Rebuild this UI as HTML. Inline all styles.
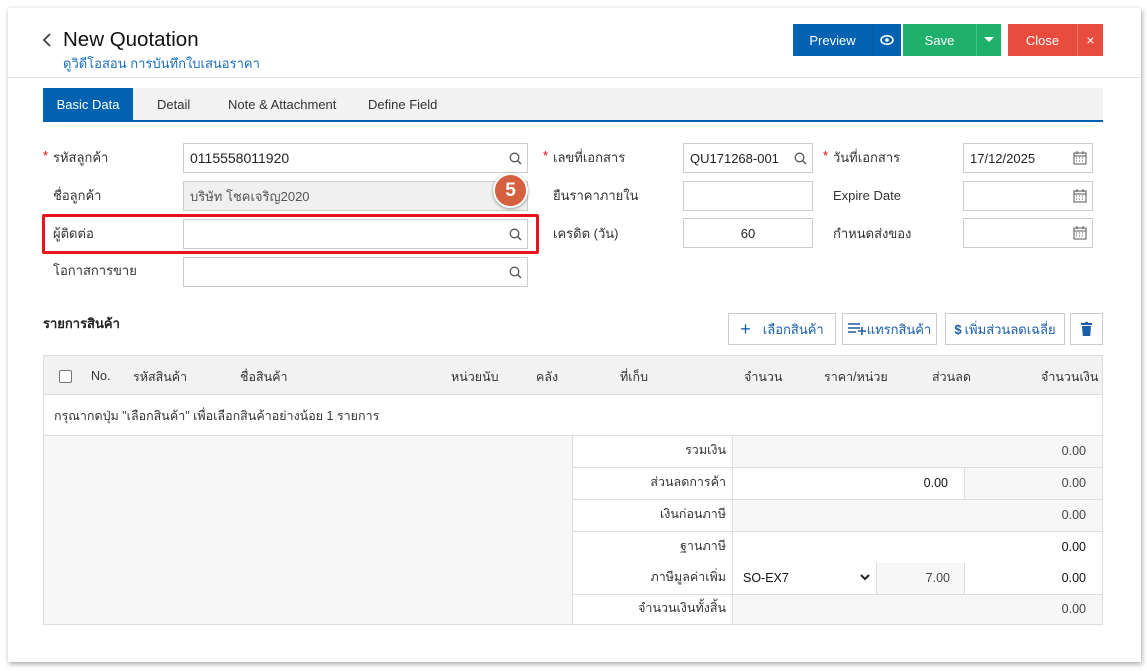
<!DOCTYPE html>
<html><head><meta charset="utf-8">
<style>
*{box-sizing:border-box;margin:0;padding:0}
body{width:1147px;height:671px;background:#fff;font-family:"Liberation Sans","DejaVu Sans",sans-serif;font-size:13px;color:#333;position:relative;overflow:hidden}
.a{position:absolute}
.card{left:8px;top:8px;width:1133px;height:654px;background:#fff;box-shadow:1px 2px 5px rgba(0,0,0,.35)}
.btn{position:absolute;color:#fff;font-size:13px;display:flex;align-items:center;justify-content:center;height:32px;top:24px}
.inp{position:absolute;height:30px;border:1px solid #ccc;background:#fff;font-size:13px;color:#222;padding-left:6px;display:flex;align-items:center}
.lbl{position:absolute;font-size:13px;color:#333}
.req{color:#e00;position:absolute;font-size:13px}
.ico{position:absolute;right:5px;top:8px}
.tb{position:absolute;top:313px;height:32px;border:1px solid #ccc;background:#fff;color:#1a5fa8;display:flex;align-items:center;justify-content:center;font-size:13px}
.th{position:absolute;top:367px;font-size:12.5px;color:#333}
.row{position:absolute;left:573px;width:530px;height:32px;border-bottom:1px solid #ddd}
.rl{position:absolute;left:0;width:160px;height:100%;text-align:right;padding-right:6px;line-height:29px;font-size:12.5px;border-right:1px solid #ddd;background:#fff}
.rv{position:absolute;height:100%;line-height:31px;text-align:right;padding-right:16px;font-size:12.5px;color:#444}
</style></head><body>
<div class="a card"></div>
<svg class="a" style="left:42px;top:33px" width="10" height="14"><path d="M8 1 L2 7 L8 13" stroke="#444" stroke-width="1.8" fill="none"/></svg>
<div class="a" style="left:63px;top:28px;font-size:20.5px;color:#111">New Quotation</div>
<div class="a" style="left:63px;top:53px;font-size:13px;color:#1a6fc0">ดูวิดีโอสอน การบันทึกใบเสนอราคา</div>
<div class="a" style="left:8px;top:77px;width:1133px;height:1px;background:#e3e3e3"></div>

<div class="btn" style="left:793px;width:79px;background:#0062b1">Preview</div>
<div class="btn" style="left:872px;width:29px;background:#0062b1;border-left:1px solid #0b57a0"><svg width="14" height="10"><ellipse cx="7" cy="5" rx="6" ry="4.2" fill="none" stroke="#fff" stroke-width="1.6"/><circle cx="7" cy="5" r="1.8" fill="#fff"/></svg></div>
<div class="btn" style="left:903px;width:73px;background:#1fb06b">Save</div>
<div class="btn" style="left:976px;width:25px;background:#1fb06b;border-left:1px solid #3fc585"><svg width="10" height="6"><path d="M0 0H10L5 5Z" fill="#fff"/></svg></div>
<div class="btn" style="left:1008px;width:69px;background:#e84c3d">Close</div>
<div class="btn" style="left:1077px;width:26px;background:#e84c3d;border-left:1px solid #f07366;font-size:14px">×</div>

<div class="a" style="left:43px;top:88px;width:1060px;height:34px;background:#f2f2f2;border-bottom:2px solid #0062b1"></div>
<div class="a" style="left:43px;top:88px;width:90px;height:34px;background:#0062b1;color:#fff;line-height:33px;text-align:center">Basic Data</div>
<div class="a" style="left:157px;top:97px">Detail</div>
<div class="a" style="left:228px;top:97px">Note &amp; Attachment</div>
<div class="a" style="left:368px;top:97px">Define Field</div>

<!-- col1 -->
<span class="req" style="left:43px;top:148px">*</span><div class="lbl" style="left:53px;top:147px">รหัสลูกค้า</div>
<div class="inp" style="left:183px;top:143px;width:345px;font-size:14px">0115558011920<svg class="ico" width="13" height="13"><circle cx="5.5" cy="5.5" r="4.3" fill="none" stroke="#555" stroke-width="1.3"/><path d="M8.5 8.5L12 12" stroke="#555" stroke-width="1.4"/></svg></div>
<div class="lbl" style="left:53px;top:185px">ชื่อลูกค้า</div>
<div class="inp" style="left:183px;top:181px;width:345px;background:#f0f0f0;color:#555">บริษัท โชคเจริญ2020</div>
<div class="lbl" style="left:53px;top:223px">ผู้ติดต่อ</div>
<div class="inp" style="left:183px;top:219px;width:345px"><svg class="ico" width="13" height="13"><circle cx="5.5" cy="5.5" r="4.3" fill="none" stroke="#555" stroke-width="1.3"/><path d="M8.5 8.5L12 12" stroke="#555" stroke-width="1.4"/></svg></div>
<div class="lbl" style="left:53px;top:260px">โอกาสการขาย</div>
<div class="inp" style="left:183px;top:257px;width:345px"><svg class="ico" width="13" height="13"><circle cx="5.5" cy="5.5" r="4.3" fill="none" stroke="#555" stroke-width="1.3"/><path d="M8.5 8.5L12 12" stroke="#555" stroke-width="1.4"/></svg></div>
<div class="a" style="left:42px;top:214px;width:497px;height:40px;border:3px solid #e8141c;border-radius:2px"></div>
<div class="a" style="left:493px;top:173px;width:35px;height:35px;border-radius:50%;background:#d5603f;border:2px solid #fff;box-shadow:0 1px 3px rgba(0,0,0,.4);color:#fff;font-weight:bold;font-size:19px;text-align:center;line-height:31px">5</div>

<!-- col2 -->
<span class="req" style="left:543px;top:148px">*</span><div class="lbl" style="left:553px;top:147px">เลขที่เอกสาร</div>
<div class="inp" style="left:683px;top:143px;width:130px">QU171268-001<svg class="ico" width="13" height="13"><circle cx="5.5" cy="5.5" r="4.3" fill="none" stroke="#555" stroke-width="1.3"/><path d="M8.5 8.5L12 12" stroke="#555" stroke-width="1.4"/></svg></div>
<div class="lbl" style="left:553px;top:185px">ยืนราคาภายใน</div>
<div class="inp" style="left:683px;top:181px;width:130px"></div>
<div class="lbl" style="left:553px;top:223px">เครดิต (วัน)</div>
<div class="inp" style="left:683px;top:218px;width:130px;justify-content:center;padding:0">60</div>

<!-- col3 -->
<span class="req" style="left:823px;top:148px">*</span><div class="lbl" style="left:833px;top:147px">วันที่เอกสาร</div>
<div class="inp" style="left:963px;top:143px;width:130px">17/12/2025<svg class="ico" style="top:7px" width="14" height="14"><rect x="1" y="2" width="12" height="11" fill="none" stroke="#555"/><path d="M1 5H13M4 0V3M10 0V3" stroke="#555"/><path d="M3 7h1M6 7h1M9 7h1M3 10h1M6 10h1M9 10h1" stroke="#555"/></svg></div>
<div class="lbl" style="left:833px;top:188px">Expire Date</div>
<div class="inp" style="left:963px;top:181px;width:130px"><svg class="ico" style="top:7px" width="14" height="14"><rect x="1" y="2" width="12" height="11" fill="none" stroke="#555"/><path d="M1 5H13M4 0V3M10 0V3" stroke="#555"/><path d="M3 7h1M6 7h1M9 7h1M3 10h1M6 10h1M9 10h1" stroke="#555"/></svg></div>
<div class="lbl" style="left:833px;top:223px">กำหนดส่งของ</div>
<div class="inp" style="left:963px;top:218px;width:130px"><svg class="ico" style="top:7px" width="14" height="14"><rect x="1" y="2" width="12" height="11" fill="none" stroke="#555"/><path d="M1 5H13M4 0V3M10 0V3" stroke="#555"/><path d="M3 7h1M6 7h1M9 7h1M3 10h1M6 10h1M9 10h1" stroke="#555"/></svg></div>

<div class="a" style="left:43px;top:313px;font-weight:bold;color:#222">รายการสินค้า</div>
<div class="tb" style="left:728px;width:108px"><span style="font-size:18px;margin-right:12px">+</span>เลือกสินค้า</div>
<div class="tb" style="left:842px;width:95px"><svg width="18" height="12" style="margin-right:1px"><path d="M0 1H12M0 5H12M0 9H8M10 8H18M14 4V12" stroke="#1a5fa8" stroke-width="1.6"/></svg>แทรกสินค้า</div>
<div class="tb" style="left:945px;width:120px"><b style="margin-right:3px">$</b>เพิ่มส่วนลดเฉลี่ย</div>
<div class="tb" style="left:1070px;width:33px"><svg width="11" height="14"><rect x="0" y="1" width="11" height="2" fill="#1a5fa8"/><rect x="4" y="0" width="3" height="1" fill="#1a5fa8"/><path d="M1 4H10L9.2 14H1.8Z" fill="#1a5fa8"/></svg></div>

<div class="a" style="left:43px;top:355px;width:1060px;height:270px;border:1px solid #ddd"></div>
<div class="a" style="left:44px;top:356px;width:1058px;height:39px;background:#f2f2f2;border-bottom:1px solid #ddd"></div>
<div class="a" style="left:59px;top:370px;width:13px;height:13px;border:1px solid #777;border-radius:2px;background:#fff"></div>
<div class="th" style="left:91px;top:369px">No.</div>
<div class="th" style="left:133px">รหัสสินค้า</div>
<div class="th" style="left:240px">ชื่อสินค้า</div>
<div class="th" style="left:451px">หน่วยนับ</div>
<div class="th" style="left:536px">คลัง</div>
<div class="th" style="left:620px">ที่เก็บ</div>
<div class="th" style="left:744px">จำนวน</div>
<div class="th" style="left:824px">ราคา/หน่วย</div>
<div class="th" style="left:932px">ส่วนลด</div>
<div class="th" style="left:1041px">จำนวนเงิน</div>
<div class="a" style="left:54px;top:406px;font-size:12.5px">กรุณากดปุ่ม "เลือกสินค้า" เพื่อเลือกสินค้าอย่างน้อย 1 รายการ</div>
<div class="a" style="left:44px;top:435px;width:529px;height:189px;background:#f7f7f7;border-top:1px solid #ddd;border-right:1px solid #ddd"></div>
<div class="a" style="left:573px;top:435px;width:530px;height:1px;background:#ddd"></div>

<div class="row" style="top:436px"><div class="rl">รวมเงิน</div><div class="rv" style="left:160px;width:369px;background:#f7f7f7">0.00</div></div>
<div class="row" style="top:468px"><div class="rl">ส่วนลดการค้า</div><div class="rv" style="left:160px;width:232px;background:#fff;color:#111;border-right:1px solid #ddd">0.00</div><div class="rv" style="left:392px;width:137px;background:#f7f7f7">0.00</div></div>
<div class="row" style="top:500px"><div class="rl">เงินก่อนภาษี</div><div class="rv" style="left:160px;width:369px;background:#f7f7f7">0.00</div></div>
<div class="row" style="top:532px"><div class="rl">ฐานภาษี</div><div class="rv" style="left:160px;width:369px;background:#fff;color:#111">0.00</div></div>
<div class="row" style="top:563px"><div class="rl">ภาษีมูลค่าเพิ่ม</div><div class="rv" style="left:160px;width:144px;background:#fff;color:#111;text-align:left;padding-left:10px;border-right:1px solid #ddd">SO-EX7<svg style="position:absolute;right:6px;top:11px" width="10" height="7"><path d="M1 1L5 5L9 1" stroke="#222" stroke-width="2" fill="none"/></svg></div><div class="rv" style="left:304px;width:88px;background:#f7f7f7;padding-right:14px;border-right:1px solid #ddd">7.00</div><div class="rv" style="left:392px;width:137px;background:#fff;color:#111">0.00</div></div>
<div class="row" style="top:595px;height:29px;border:0"><div class="rl" style="line-height:26px">จำนวนเงินทั้งสิ้น</div><div class="rv" style="left:160px;width:369px;background:#f7f7f7;line-height:28px">0.00</div></div>
</body></html>
